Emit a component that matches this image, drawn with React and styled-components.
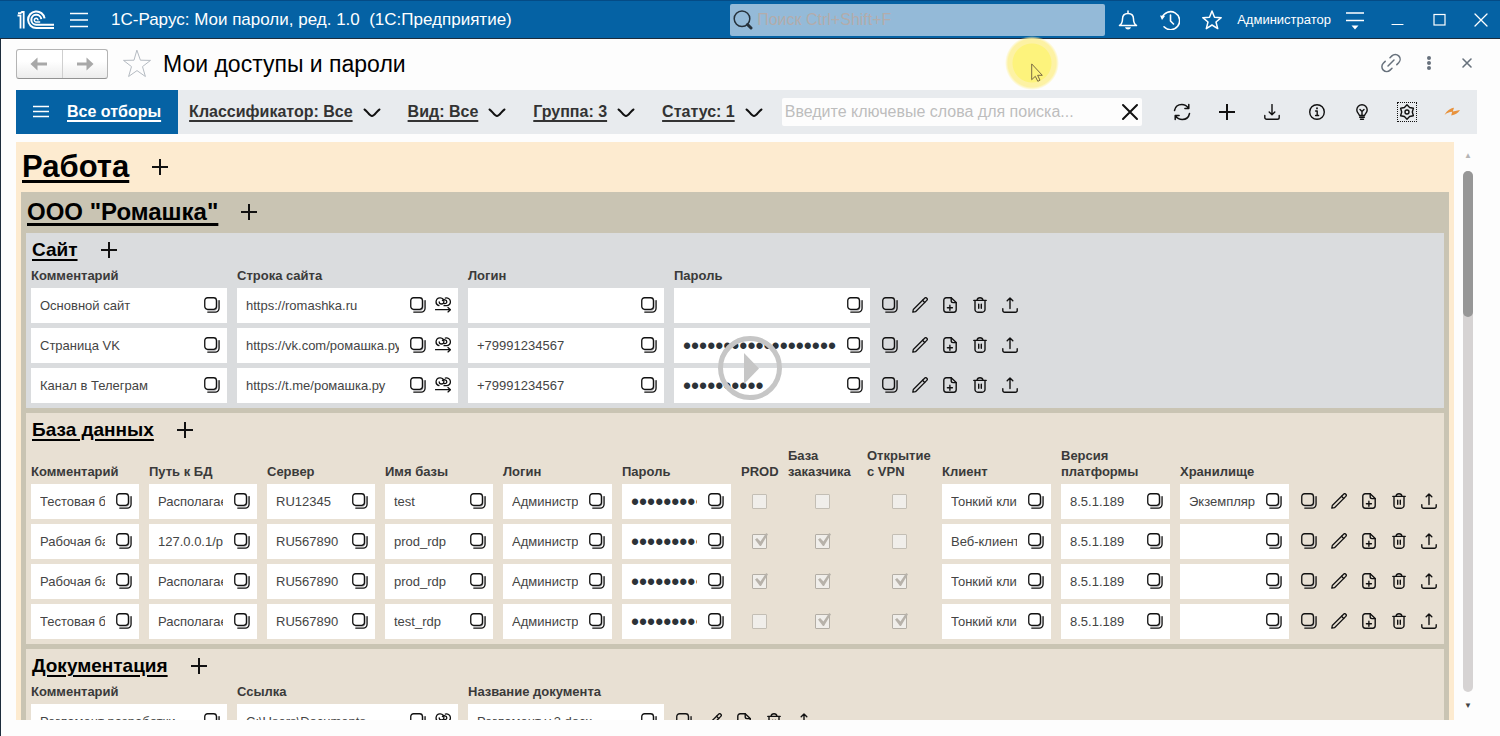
import styled, { css, createGlobalStyle } from "styled-components"

const siteTable = {
    title: "Сайт",
    tone: "#dadcde",
    columns: [
        { name: "Комментарий", width: 206 },
        { name: "Строка сайта", width: 231, type: "link" },
        { name: "Логин", width: 206 },
        { name: "Пароль", width: 206, type: "password" },
    ],
    rows: [
        ["Основной сайт", "https://romashka.ru", "", ""],
        ["Страница VK", "https://vk.com/ромашка.ру", "+79991234567", "x".repeat(19)],
        ["Канал в Телеграм", "https://t.me/ромашка.ру", "+79991234567", "x".repeat(10)],
    ],
}

const dbTable = {
    title: "База данных",
    tone: "#e8e0d3",
    columns: [
        { name: "Комментарий", width: 118 },
        { name: "Путь к БД", width: 118 },
        { name: "Сервер", width: 118 },
        { name: "Имя базы", width: 118 },
        { name: "Логин", width: 119 },
        { name: "Пароль", width: 119, type: "password" },
        { name: "PROD", width: 47, type: "check" },
        { name: "База заказчика", width: 79, type: "check" },
        { name: "Открытие с\u00a0VPN", width: 75, type: "check" },
        { name: "Клиент", width: 119 },
        { name: "Версия платформы", width: 119 },
        { name: "Хранилище", width: 119 },
    ],
    rows: [
        ["Тестовая база", "Располагается", "RU12345", "test", "Администратор", "x".repeat(12), false, false, false, "Тонкий клиент", "8.5.1.189", "Экземпляр"],
        ["Рабочая база", "127.0.0.1/prod", "RU567890", "prod_rdp", "Администратор", "x".repeat(12), true, true, false, "Веб-клиент", "8.5.1.189", ""],
        ["Рабочая база", "Располагается", "RU567890", "prod_rdp", "Администратор", "x".repeat(12), true, true, true, "Тонкий клиент", "8.5.1.189", ""],
        ["Тестовая база", "Располагается", "RU567890", "test_rdp", "Администратор", "x".repeat(12), false, true, true, "Тонкий клиент", "8.5.1.189", ""],
    ],
}

const docTable = {
    title: "Документация",
    tone: "#e8e0d3",
    columns: [
        { name: "Комментарий", width: 206 },
        { name: "Ссылка", width: 231, type: "link" },
        { name: "Название документа", width: 206 },
    ],
    rows: [
        ["Регламент разработки", "C:\\Users\\Documents", "Регламент v.3.docx"],
    ],
}

const filters = ["Классификатор: Все", "Вид: Все", "Группа: 3", "Статус: 1"]

const Icon = ({ size = 16, box = 16, width = 1.4, children }) => (
    <svg width={size} height={size} viewBox={`0 0 ${box} ${box}`} fill="none" stroke="currentColor"
        strokeWidth={width} strokeLinecap="round" strokeLinejoin="round" aria-hidden="true">
        {children}
    </svg>
)

const Logo = () => (
    <svg width="38" height="20" viewBox="0 0 38 20" fill="none" stroke="#fff" strokeWidth="2" aria-hidden="true">
        <path d="M.5 5.500h3v13M1 3.200h2.500L5 2h1.700v16.500" strokeWidth="1.8" />
        <path d="M27.600 8.400A8.300 8.300 0 1 0 19.300 18H37" />
        <path d="M24.300 9.200A5 5 0 1 0 19.300 14.800H37" />
        <path d="M20.900 10.400a1.800 1.800 0 1 0-1.500 1.500h3.800" strokeWidth="1.5" />
    </svg>
)

const PlusIcon = () => <Icon width={2}><path d="M8 0v16M0 8h16" strokeLinecap="butt" /></Icon>

const CopyIcon = () => (
    <Icon box={17} width={1.4}>
        <path d="M4 14h6.800a3 3 0 0 0 3-3V3.500" stroke="#a9a9ad" strokeWidth="1.2" />
        <rect x=".8" y=".8" width="12.400" height="12.400" rx="3" />
        <path d="M16 3.800v8.200a4 4 0 0 1-4 4H4" />
    </Icon>
)

const JumpIcon = () => (
    <Icon width={1.3}>
        <path d="M4 8.600A3.900 3.900 0 1 1 8.900 4.800C8.900 6.300 7.800 7 6.500 7 5 7 4.200 6 4.200 4.800" />
        <path d="M10.300 1.100A3.900 3.900 0 1 1 11.300 8.700H9" />
        <path d="M7.400 3.600c1-1.300 4.400-1.200 4.400 1.200 0 1.400-1.200 2-2.400 1.800" />
        <path d="M.5 12.700h15M13 10.500l2.400 2.200L13 14.900" />
    </Icon>
)

const PencilIcon = () => (
    <Icon width={1.3}>
        <path d="M.8 15.200l.5-2.700L12.600 1.200a1.500 1.500 0 0 1 2.200 2.200L3.500 14.700z" />
        <path d="M10.500 3.300l2.200 2.200" />
    </Icon>
)

const FileIcon = () => (
    <Icon width={1.4}>
        <path d="M9.200.800H4.200a2.400 2.400 0 0 0-2.400 2.400v9.600a2.400 2.400 0 0 0 2.400 2.400h7.600a2.400 2.400 0 0 0 2.400-2.400V5.600z" />
        <path d="M9.200.800v3a1.800 1.800 0 0 0 1.800 1.800h3.200M7.900 8.200v5M5.400 10.700h5" />
    </Icon>
)

const TrashIcon = () => (
    <Icon width={1.4}>
        <path d="M1.800 3.400h12.400M3 3.600v8.800a2.800 2.800 0 0 0 2.800 2.800h4.400a2.800 2.800 0 0 0 2.800-2.800V3.600M5 3.200C5.300 1.600 6.300.800 8 .800s2.700.800 3 2.400M6.700 7.200v4M9.300 7.200v4" />
    </Icon>
)

const UploadIcon = () => (
    <Icon width={1.4}>
        <path d="M8 11.600V.900M5.200 3.700L8 .900l2.800 2.800M.800 11.800v1.600a1.800 1.800 0 0 0 1.800 1.800h10.800a1.800 1.800 0 0 0 1.800-1.800v-1.600" />
    </Icon>
)

const actions = [
    ["Скопировать", <CopyIcon />],
    ["Изменить", <PencilIcon />],
    ["Добавить файл", <FileIcon />],
    ["Удалить", <TrashIcon />],
    ["Выгрузить", <UploadIcon />],
]

const Cell = ({ column, value }) => {
    if (column.type === "check") {
        return <CheckCell><Check type="checkbox" aria-label={column.name} defaultChecked={value} disabled /></CheckCell>
    }
    const secret = column.type === "password"
    return (
        <td>
            <Field>
                <FieldInput type={secret ? "password" : "text"} $secret={secret} aria-label={column.name} defaultValue={value} readOnly />
                <SmallButton aria-label="Копировать"><CopyIcon /></SmallButton>
                {column.type === "link" && <SmallButton aria-label="Перейти"><JumpIcon /></SmallButton>}
            </Field>
        </td>
    )
}

const Section = ({ data }) => (
    <SectionPanel $tone={data.tone}>
        <Heading $height={35}>
            <SectionTitle>{data.title}</SectionTitle>
            <SmallButton aria-label="Добавить"><PlusIcon /></SmallButton>
        </Heading>
        <Table>
            <colgroup>
                {data.columns.map((column) => <col key={column.name} style={{ width: column.width }} />)}
                <col style={{ width: 140 }} />
            </colgroup>
            <thead>
                <tr>
                    {data.columns.map((column) => <th key={column.name} scope="col">{column.name}</th>)}
                    <td />
                </tr>
            </thead>
            <tbody>
                {data.rows.map((row, i) => (
                    <tr key={i}>
                        {data.columns.map((column, j) => <Cell key={column.name} column={column} value={row[j]} />)}
                        <ActionsCell>
                            <Actions>
                                {actions.map(([name, icon]) => <ActionButton key={name} aria-label={name}>{icon}</ActionButton>)}
                            </Actions>
                        </ActionsCell>
                    </tr>
                ))}
            </tbody>
        </Table>
    </SectionPanel>
)

const App = () => (
    <Window>
        <GlobalStyle />
        <TitleBar>
            <Logo />
            <BarButton aria-label="Меню">
                <Icon size={20} box={20} width={1.6}><path d="M1 3.500h18M1 10h18M1 16.500h18" strokeLinecap="butt" /></Icon>
            </BarButton>
            <AppName>{"1С-Рарус: Мои пароли, ред. 1.0\u00a0 (1С:Предприятие)"}</AppName>
            <GlobalSearch>
                <Icon size={20} box={20} width={1.5}>
                    <circle cx="9" cy="8.800" r="7.800" /><path d="M14.500 14.500l3.500 3.500" strokeWidth="3" />
                </Icon>
                <input type="search" aria-label="Поиск" placeholder="Поиск Ctrl+Shift+F" />
            </GlobalSearch>
            <BarTools>
                <BarButton aria-label="Уведомления">
                    <Icon size={20} box={20} width={1.5}>
                        <path d="M1.500 15.500c2.500-1.500 3-3.500 3-6.500 0-3.200 2-5.500 5.500-5.500s5.500 2.300 5.500 5.500c0 3 .5 5 3 6.500zM10 3.500V1" />
                        <path d="M7 17.200h6c-.6 1.600-1.600 2.200-3 2.200s-2.400-.6-3-2.200z" fill="currentColor" stroke="none" />
                    </Icon>
                </BarButton>
                <BarButton aria-label="История">
                    <Icon size={20} box={20} width={1.6}>
                        <path d="M2.200 7.500A9 9 0 1 1 4 16.800M10.500 5v6l3 3" /><path d="M0 5.500l5 .5-3 4z" fill="currentColor" stroke="none" />
                    </Icon>
                </BarButton>
                <BarButton aria-label="Избранное">
                    <Icon size={20} box={20} width={1.5}><path d="M10 1l2.500 6.300 6.700.4-5.200 4.300 1.700 6.600L10 15l-5.700 3.600L6 12 .8 7.700l6.700-.4z" /></Icon>
                </BarButton>
                <UserName>Администратор</UserName>
                <BarButton aria-label="Сервис">
                    <Icon size={20} box={20} width={1.6}>
                        <path d="M1 3h18M1 10.500h18" strokeLinecap="butt" /><path d="M6.500 15.500h7L10 19.500z" fill="currentColor" stroke="none" />
                    </Icon>
                </BarButton>
                <WindowButton aria-label="Свернуть"><Icon width={1.2}><path d="M3 12.500h11" /></Icon></WindowButton>
                <WindowButton aria-label="Развернуть"><Icon width={1.2}><rect x="3" y="2.500" width="11" height="10.500" strokeLinejoin="miter" /></Icon></WindowButton>
                <WindowButton aria-label="Закрыть окно"><Icon width={1.3}><path d="M2 2l12 12M14 2L2 14" /></Icon></WindowButton>
            </BarTools>
        </TitleBar>
        <Page>
            <Header>
                <NavButtons>
                    <NavButton aria-label="Назад"><Icon size={18} box={18} width={3}><path d="M17 9H6" strokeLinecap="butt" /><path d="M7.500 2.500v13L.5 9z" fill="currentColor" stroke="none" /></Icon></NavButton>
                    <NavButton aria-label="Вперёд"><Icon size={18} box={18} width={3}><path d="M1 9h11" strokeLinecap="butt" /><path d="M10.500 2.500v13l7-6.500z" fill="currentColor" stroke="none" /></Icon></NavButton>
                </NavButtons>
                <StarButton aria-label="В избранное">
                    <Icon size={30} box={30} width={1}><path d="M15 1.500l3.400 9.700 10.100.2-8 6.200 2.900 9.900-8.400-5.900-8.400 5.900 2.900-9.900-8-6.200 10.100-.2z" strokeLinejoin="miter" /></Icon>
                </StarButton>
                <PageTitle>Мои доступы и пароли</PageTitle>
                <HeaderTools>
                    <HeaderButton aria-label="Ссылка">
                        <Icon size={20} box={20} width={1.500}>
                            <path d="M9 4.800l1.900-1.900a4.800 4.800 0 0 1 6.800 6.800l-1.900 1.900" />
                            <path d="M11 15.200l-1.900 1.900a4.800 4.800 0 0 1-6.800-6.800l1.900-1.900M7 13l6-6" />
                        </Icon>
                    </HeaderButton>
                    <HeaderButton aria-label="Ещё">
                        <Icon><g fill="currentColor" stroke="none"><circle cx="8" cy="3" r="2" /><circle cx="8" cy="8" r="2" /><circle cx="8" cy="13" r="2" /></g></Icon>
                    </HeaderButton>
                    <HeaderButton aria-label="Закрыть"><Icon width={1.6}><path d="M4 4l8 8M12 4l-8 8" /></Icon></HeaderButton>
                </HeaderTools>
            </Header>
            <Toolbar>
                <AllFilters>
                    <Icon width={1.5}><path d="M0 2.500h16M0 7.500h16M0 12.500h16" strokeLinecap="butt" /></Icon>
                    <span>Все отборы</span>
                </AllFilters>
                <Filters>
                    {filters.map((name) => (
                        <Filter key={name}>
                            <span>{name}</span>
                            <Icon size={18} box={18} width={2}><path d="M1.500 6.500C4 7.700 6.500 13 9 13S14 7.700 16.500 6.500" /></Icon>
                        </Filter>
                    ))}
                </Filters>
                <KeywordSearch>
                    <input type="text" aria-label="Поиск по ключевым словам" placeholder="Введите ключевые слова для поиска..." />
                    <ToolButton aria-label="Очистить"><Icon size={18} box={18} width={2}><path d="M2 2l14 14M16 2L2 16" /></Icon></ToolButton>
                </KeywordSearch>
                <Tools>
                    <ToolButton aria-label="Обновить">
                        <Icon size={18} box={18} width={1.5}>
                            <path d="M1.500 7.500C2.200 4 5 1.500 8.800 1.500c2.800 0 5 1.300 6.500 3.500M16.500 10.500c-.7 3.500-3.500 6-7.300 6-2.800 0-5-1.300-6.500-3.500M15.800 1.500V5.400h-3.900M2.200 16.500v-3.900h3.900" />
                        </Icon>
                    </ToolButton>
                    <ToolButton aria-label="Создать"><PlusIcon /></ToolButton>
                    <ToolButton aria-label="Загрузить">
                        <Icon width={1.4}><path d="M8 .5v10M5.200 8L8 10.800 10.800 8M.8 11.500v1.900a1.800 1.800 0 0 0 1.800 1.800h10.800a1.800 1.800 0 0 0 1.800-1.800v-1.900" /></Icon>
                    </ToolButton>
                    <ToolButton aria-label="Справка">
                        <Icon><circle cx="8" cy="8" r="7.300" /><path d="M6.600 7h1.600v4.500M6.600 11.500h3" /><path d="M8 4.200v.2" strokeWidth="1.800" /></Icon>
                    </ToolButton>
                    <ToolButton aria-label="Подсказка">
                        <Icon><path d="M5.500 11.500C5 9.800 2.800 8.700 2.800 5.900a5.200 5.200 0 0 1 10.400 0c0 2.800-2.200 3.900-2.700 5.600zM5.700 13.200h4.600M6.500 15.200h3M8 11.300V7.500M6 5.500l2 2 2-2" /></Icon>
                    </ToolButton>
                    <ToolButton $focused aria-label="Настройки">
                        <Icon><path d="M8 .800l2.600 2.700 3.800.8-1.100 3.700 1.100 3.700-3.800.8L8 15.200l-2.600-2.700-3.800-.8L2.700 8 1.600 4.300l3.800-.8z" /><circle cx="8" cy="8" r="2" /></Icon>
                    </ToolButton>
                    <ToolButton aria-label="Рарус">
                        <Icon size={18} box={18}><path d="M1.500 12C4 7.500 7 5.500 11 4.800L9.800 8.600 17 7c-2.200 3.500-4.800 4.800-8.800 5.400l1-3.600C6.200 9.100 4 9.900 1.500 12z" fill="#e8923c" stroke="none" /></Icon>
                    </ToolButton>
                </Tools>
            </Toolbar>
            <Workspace>
                <Content>
                    <Heading $height={50}>
                        <GroupTitle>Работа</GroupTitle>
                        <SmallButton aria-label="Добавить"><PlusIcon /></SmallButton>
                    </Heading>
                    <Company>
                        <Heading $height={41}>
                            <CompanyTitle>ООО "Ромашка"</CompanyTitle>
                            <SmallButton aria-label="Добавить"><PlusIcon /></SmallButton>
                        </Heading>
                        <Section data={siteTable} />
                        <Section data={dbTable} />
                        <Section data={docTable} />
                    </Company>
                </Content>
                <ScrollBar>
                    <ScrollArrow $faded>▲</ScrollArrow>
                    <ScrollTrack><ScrollThumb /></ScrollTrack>
                    <ScrollArrow>▼</ScrollArrow>
                </ScrollBar>
            </Workspace>
        </Page>
        <PlayButton aria-label="Воспроизвести">
            <svg width="64" height="64" viewBox="0 0 64 64" aria-hidden="true">
                <circle cx="32" cy="32" r="29.500" fill="none" stroke="#c6c6c6" strokeWidth="5" />
                <path d="M26 17v31l15-15.500z" fill="#c6c6c6" />
            </svg>
        </PlayButton>
        <Pointer>
            <svg width="12" height="19" viewBox="0 0 12 19" aria-hidden="true">
                <path d="M.7.900v15.800l3.600-3.400 2.500 5 2.200-1.100-2.400-4.900h4.700z" fill="#fdf37c" stroke="#7a6a45" />
            </svg>
        </Pointer>
    </Window>
)

const GlobalStyle = createGlobalStyle`
    * {
        box-sizing: border-box;
    }
    body {
        margin: 0;
        background: #fdfdfd;
        color: #333;
        font-family: "Liberation Sans", Arial, sans-serif;
        font-size: 13px;
    }
    button, input {
        font: inherit;
        color: inherit;
        border: none;
        outline: none;
        padding: 0;
        margin: 0;
        background: none;
    }
    button {
        cursor: pointer;
    }
    svg {
        display: block;
        flex: none;
    }
    h1, h2, h3, h4 {
        margin: 0;
    }
`
const Window = styled.div`
    position: relative;
    height: 100vh;
    display: flex;
    flex-direction: column;
    overflow: hidden;
`
const TitleBar = styled.header`
    flex: none;
    height: 39px;
    padding: 0 7px 0 17px;
    display: flex;
    align-items: center;
    background: #0562a4;
    border-top: 1px solid #044b86;
    border-bottom: 1px solid #1d2c3c;
    color: #fff;
`
const BarButton = styled.button`
    width: 24px;
    height: 24px;
    display: grid;
    place-items: center;
    ${TitleBar} > & {
        margin-left: 12px;
    }
`
const WindowButton = styled(BarButton)`
    margin-left: 18px;
`
const AppName = styled.span`
    flex: 1;
    margin-left: 20px;
    font-size: 17px;
    white-space: nowrap;
`
const GlobalSearch = styled.label`
    flex: 0 0 25vw;
    height: 32px;
    padding: 0 3px;
    display: flex;
    align-items: center;
    gap: 4px;
    border-radius: 2px;
    background: #94bad8;
    color: #26323c;
    input {
        flex: 1;
        min-width: 0;
        font-size: 16px;
        &::placeholder {
            color: #b3acab;
            opacity: 1;
        }
    }
`
const BarTools = styled.div`
    margin-left: 11px;
    display: flex;
    align-items: center;
    ${BarButton} + ${BarButton} {
        margin-left: 18px;
    }
`
const UserName = styled.span`
    margin: 0 12px 0 13px;
    font-size: 13px;
`
const Page = styled.main`
    flex: 1;
    min-height: 0;
    padding: 0 23px 16px 15px;
    border-left: 1px solid #1d2c3c;
    display: flex;
    flex-direction: column;
`
const Header = styled.div`
    flex: none;
    height: 51px;
    padding-bottom: 1px;
    display: flex;
    align-items: center;
`
const NavButtons = styled.div`
    width: 92px;
    height: 30px;
    display: flex;
    border: 1px solid #b4b4b4;
    border-bottom-color: #929292;
    border-radius: 3px;
    background: linear-gradient(#fff 40%, #ececec);
`
const NavButton = styled.button`
    flex: 1;
    display: grid;
    place-items: center;
    color: #a8a8a8;
    & + & {
        border-left: 1px solid #cfcfcf;
    }
`
const StarButton = styled.button`
    margin-left: 14px;
    color: #b5bbc2;
`
const PageTitle = styled.h1`
    margin-left: 11px;
    font-size: 23px;
    font-weight: 400;
    color: #000;
`
const HeaderTools = styled.div`
    margin-left: auto;
    padding-bottom: 2px;
    display: flex;
    gap: 18px;
`
const HeaderButton = styled.button`
    width: 20px;
    height: 20px;
    display: grid;
    place-items: center;
    color: #67717c;
`
const Toolbar = styled.div`
    flex: none;
    height: 44px;
    margin-bottom: 8px;
    padding-right: 13px;
    display: flex;
    align-items: center;
    background: #e8ebee;
    color: #111;
`
const underlined = css`
    text-decoration: underline;
    text-decoration-thickness: 2px;
    text-underline-offset: 3px;
`
const AllFilters = styled.button`
    align-self: stretch;
    padding: 0 17px;
    display: flex;
    align-items: center;
    gap: 18px;
    background: #0562a4;
    color: #fff;
    font-size: 16px;
    font-weight: bold;
    span {
        ${underlined}
    }
`
const Filters = styled.div`
    margin-left: 11px;
    display: flex;
    gap: 27px;
`
const Filter = styled.button`
    display: flex;
    align-items: center;
    gap: 10px;
    font-size: 16px;
    font-weight: bold;
    white-space: nowrap;
    span {
        color: #333;
        ${underlined}
    }
`
const ToolButton = styled.button`
    width: 24px;
    height: 24px;
    display: grid;
    place-items: center;
    ${props => props.$focused && css`
        svg {
            outline: 1px dotted #111;
            outline-offset: 1px;
        }
    `}
`
const KeywordSearch = styled.div`
    flex: 1;
    min-width: 0;
    height: 28px;
    margin: 0 28px 0 19px;
    padding-left: 3px;
    display: flex;
    align-items: center;
    border-radius: 2px;
    background: #fdfdfd;
    input {
        flex: 1;
        min-width: 0;
        font-size: 16px;
        &::placeholder {
            color: #bdbdbd;
            opacity: 1;
        }
    }
`
const Tools = styled.div`
    display: flex;
    gap: 21px;
`
const Workspace = styled.div`
    flex: 1;
    min-height: 0;
    padding-right: 4px;
    display: flex;
    gap: 9px;
`
const Content = styled.div`
    flex: 1;
    min-width: 0;
    overflow: hidden;
    background: #fdebd0;
`
const Company = styled.section`
    margin: 0 5px;
    padding: 0 5px;
    background: #c9c4b3;
`
const SectionPanel = styled.section`
    padding-left: 5px;
    margin-bottom: 5px;
    overflow: hidden;
    background: ${props => props.$tone};
`
const Heading = styled.div`
    height: ${props => props.$height}px;
    padding: 0 0 1px 6px;
    display: flex;
    align-items: center;
    gap: 23px;
    color: #000;
    ${Company} & {
        padding-left: 1px;
    }
`
const GroupTitle = styled.h2`
    font-size: 31px;
    ${underlined}
    text-decoration-thickness: 3px;
`
const CompanyTitle = styled.h3`
    font-size: 24px;
    ${underlined}
    text-decoration-thickness: 3px;
`
const SectionTitle = styled.h4`
    font-size: 19px;
    ${underlined}
`
const Table = styled.table`
    width: 0;
    table-layout: fixed;
    border-collapse: collapse;
    th {
        padding: 0 0 4px;
        line-height: 16px;
        text-align: left;
        vertical-align: bottom;
        color: #3a3a3a;
    }
    td {
        padding: 0 10px 5px 0;
    }
    thead td {
        padding: 0;
    }
`
const Field = styled.div`
    height: 35px;
    padding: 0 7px 1px 9px;
    display: flex;
    align-items: center;
    gap: 9px;
    background: #fff;
`
const FieldInput = styled.input`
    flex: 1;
    min-width: 0;
    height: 24px;
    color: #444;
    ${Field} > & {
        margin-right: 2px;
    }
    ${props => props.$secret && css`
        padding-top: 2px;
        font-size: 23px;
        color: #2c3238;
    `}
`
const SmallButton = styled.button`
    display: block;
    color: #111;
`
const CheckCell = styled.td`
    vertical-align: middle;
`
const Check = styled.input`
    appearance: none;
    display: block;
    width: 15px;
    height: 15px;
    border: 1px solid #c3beb4;
    border-radius: 1px;
    background: #f0eeea;
    ${CheckCell} > & {
        margin: 0 auto;
    }
    &:checked {
        border-color: #b3aea5;
    }
    &:checked::before {
        content: "";
        display: block;
        width: 13px;
        height: 13px;
        margin: -2px 0 0 2px;
        background: #b7b2aa;
        clip-path: polygon(0 50%, 16% 38%, 42% 66%, 86% 0, 100% 10%, 46% 100%, 38% 100%);
    }
`
const ActionsCell = styled.td`
    ${Table} && {
        padding-right: 0;
    }
`
const Actions = styled.div`
    height: 35px;
    padding-bottom: 1px;
    display: flex;
    align-items: center;
    gap: 10px;
`
const ActionButton = styled.button`
    width: 20px;
    height: 20px;
    display: grid;
    place-items: center;
    color: #111;
`
const ScrollBar = styled.div`
    width: 10px;
    padding: 7px 0;
    display: flex;
    flex-direction: column;
    align-items: center;
`
const ScrollArrow = styled.span`
    height: 14px;
    font-size: 8px;
    line-height: 14px;
    color: ${props => props.$faded ? "#b5b5b5" : "#444"};
`
const ScrollTrack = styled.div`
    flex: 1;
    width: 10px;
    margin: 8px 0 7px;
    border-radius: 5px;
    background: #d6d3d3;
`
const ScrollThumb = styled.div`
    height: 28%;
    border-radius: 5px;
    background: #979797;
`
const PlayButton = styled.button`
    position: absolute;
    top: 50%;
    left: 50%;
    transform: translate(-50%, -50%);
`
const Pointer = styled.div`
    position: absolute;
    top: 36px;
    left: 1005px;
    width: 54px;
    height: 54px;
    padding: 27px 0 0 26px;
    border-radius: 50%;
    background: radial-gradient(#fdf37c 0 19px, #fdf2a4 20px 24px, transparent 27px);
    pointer-events: none;
`
export default App;
